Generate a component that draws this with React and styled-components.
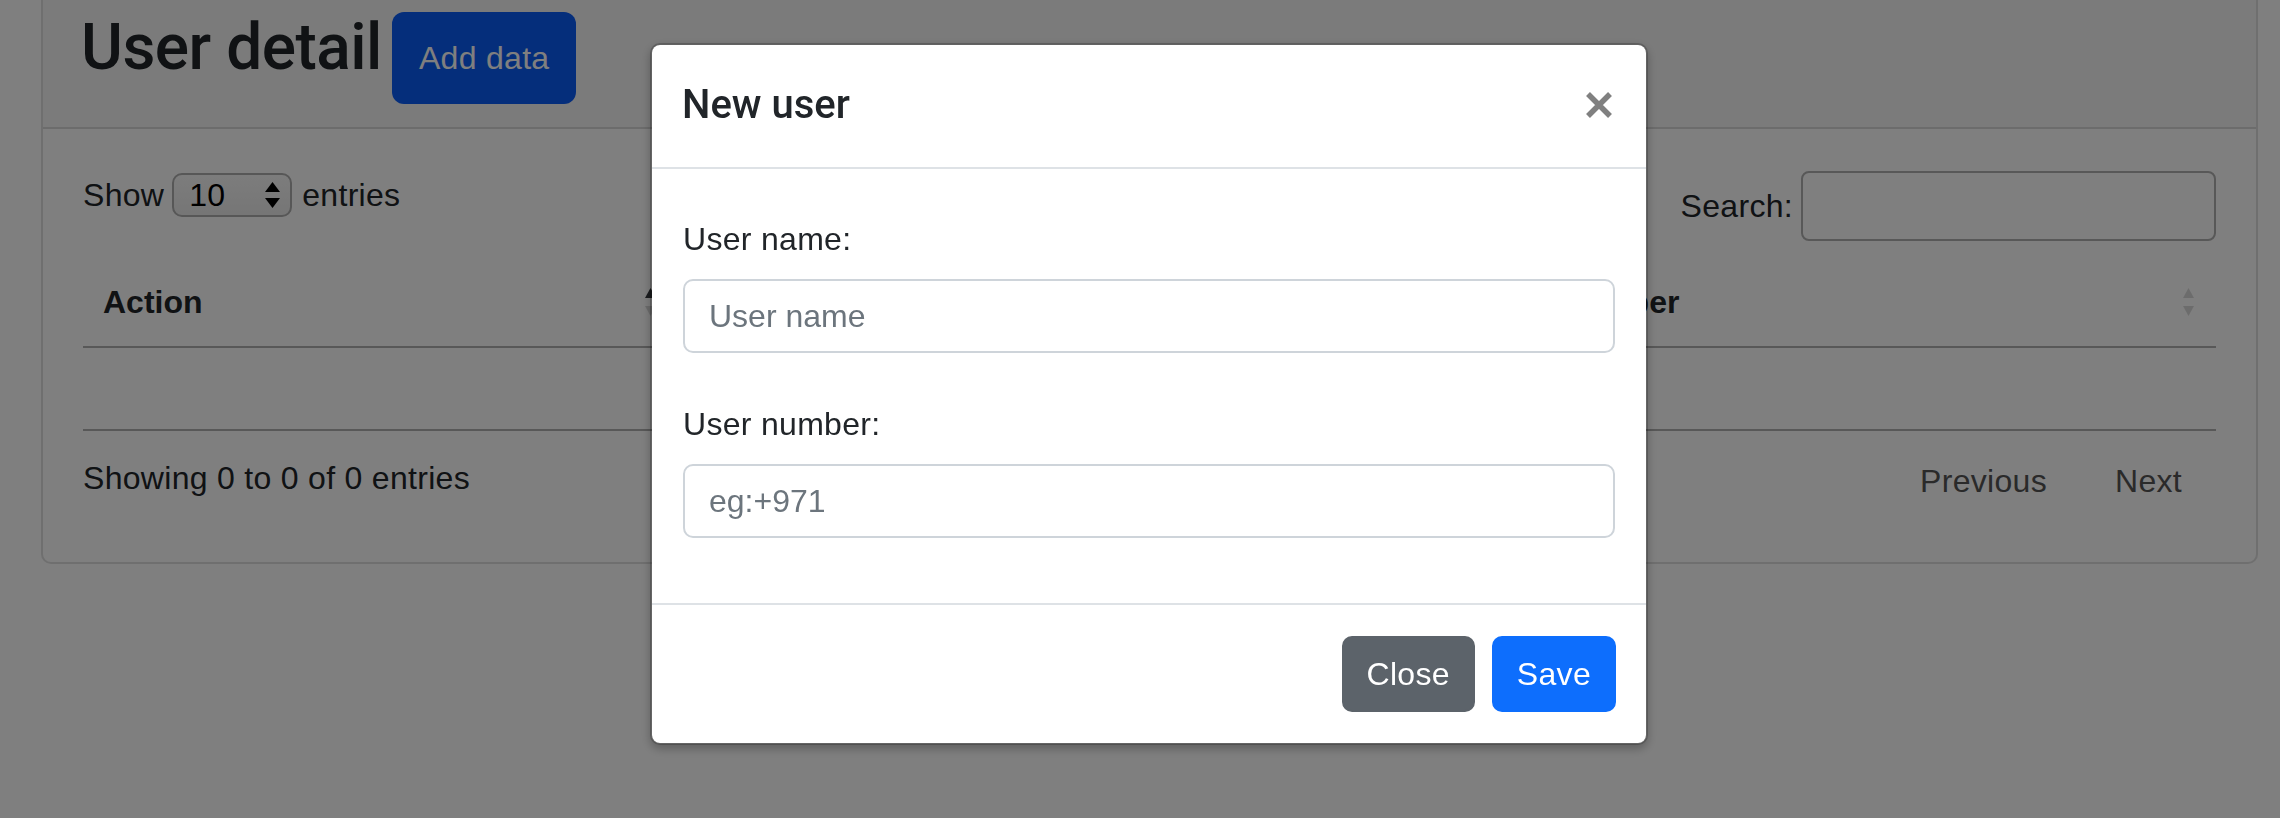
import React from "react";
import styled, { createGlobalStyle } from "styled-components";

const GlobalStyle = createGlobalStyle`
  * { box-sizing: border-box; }
  html, body { margin: 0; padding: 0; }
  body {
    font-family: "Liberation Sans", Arial, sans-serif;
    font-size: 32px;
    line-height: 1.5;
    letter-spacing: 0.3px;
    color: #212529;
    background: #fff;
    overflow: hidden;
  }
`;

const Page = styled.div`
  min-height: 818px;
  padding: 0 22px 0 41px;
`;

const Card = styled.section`
  margin-top: -10px;
  border: 2px solid rgba(0, 0, 0, 0.125);
  border-radius: 10px;
  background: #fff;
  overflow: hidden;
`;

const CardHeader = styled.header`
  display: flex;
  align-items: flex-start;
  gap: 10px;
  padding: 18px 38px 23px;
  background: rgba(0, 0, 0, 0.03);
  border-bottom: 2px solid rgba(0, 0, 0, 0.125);
`;

const PageTitle = styled.h2`
  margin: 0;
  font-family: Roboto, "Liberation Sans", sans-serif;
  font-size: 64px;
  font-weight: 500;
  line-height: 1.2;
  letter-spacing: -0.5px;
`;

const AddButton = styled.button`
  margin-top: 2px;
  height: 92px;
  padding: 0 27px;
  font: inherit;
  font-size: 32px;
  letter-spacing: 0.3px;
  color: #fff;
  background: #0a5cf6;
  border: none;
  border-radius: 12px;
`;

const CardBody = styled.div`
  padding: 42px 40px 57px;
`;

const TopBar = styled.div`
  display: flex;
  justify-content: space-between;
  align-items: flex-start;
`;

const LengthControl = styled.label`
  display: flex;
  align-items: center;
  height: 48px;
`;

const SelectBox = styled.div`
  display: flex;
  align-items: center;
  justify-content: space-between;
  width: 120px;
  height: 44px;
  margin: 0 10px 0 8px;
  padding: 0 10px 0 15px;
  border: 2px solid #aeaeae;
  border-radius: 10px;
  background: linear-gradient(#f9f9f9, #ececec);
  color: #000;
`;

const SearchControl = styled.label`
  display: flex;
  align-items: center;
  gap: 8px;
`;

const SearchInput = styled.input`
  width: 415px;
  height: 70px;
  padding: 0 10px;
  border: 2px solid #b0b0b0;
  border-radius: 8px;
  background: transparent;
  font: inherit;
`;

const Table = styled.table`
  width: 100%;
  margin-top: 17px;
  border-collapse: collapse;
  table-layout: fixed;
`;

const Th = styled.th`
  width: ${(p) => (p.$w ? `${p.$w}px` : "auto")};
  padding: 20px 22px 20px 20px;
  text-align: left;
  font-weight: 700;
  letter-spacing: 0;
  border-bottom: 2px solid #b0b0b0;
`;

const HeadInner = styled.div`
  display: flex;
  align-items: center;
  justify-content: space-between;
`;

const Td = styled.td`
  height: 83px;
  padding: 16px 20px;
  border-bottom: 2px solid #b0b0b0;
`;

const TableFooter = styled.div`
  display: flex;
  justify-content: space-between;
  align-items: flex-start;
  margin-top: 23px;
`;

const Info = styled.div`
  line-height: 48px;
`;

const Pagination = styled.nav`
  display: flex;
  margin-top: 3px;
`;

const PageLink = styled.span`
  padding: 0 34px;
  color: #555;
  line-height: 48px;
`;

const Backdrop = styled.div`
  position: fixed;
  inset: 0;
  background: rgba(0, 0, 0, 0.5);
`;

const ModalLayer = styled.div`
  position: fixed;
  inset: 0;
  display: flex;
  justify-content: center;
  align-items: flex-start;
  padding: 43px 0 0 18px;
`;

const ModalContent = styled.div`
  width: 998px;
  background: #fff;
  background-clip: padding-box;
  border: 2px solid rgba(0, 0, 0, 0.2);
  border-radius: 10px;
  box-shadow: 0 4px 10px rgba(0, 0, 0, 0.25);
`;

const ModalHeader = styled.div`
  display: flex;
  align-items: center;
  justify-content: space-between;
  padding: 30px 33px 32px 30px;
  border-bottom: 2px solid #dee2e6;
`;

const ModalTitle = styled.h5`
  margin: 0;
  font-family: Roboto, "Liberation Sans", sans-serif;
  font-size: 40px;
  font-weight: 500;
  line-height: 1.5;
  letter-spacing: 0;
`;

const CloseIcon = styled.button`
  display: flex;
  padding: 0;
  border: none;
  background: none;
  color: #808080;
`;

const ModalBody = styled.div`
  padding: 46px 31px 18px;
`;

const FieldGroup = styled.div`
  margin-bottom: 47px;
`;

const FieldLabel = styled.label`
  display: block;
  margin-bottom: 16px;
  line-height: 48px;
`;

const TextInput = styled.input`
  display: block;
  width: 100%;
  height: 74px;
  padding: 0 24px;
  border: 2px solid #ced4da;
  border-radius: 10px;
  font: inherit;
  color: #212529;
  background: #fff;
  &::placeholder {
    color: #6c757d;
  }
`;

const ModalFooter = styled.div`
  display: flex;
  justify-content: flex-end;
  gap: 17px;
  padding: 31px 30px;
  border-top: 2px solid #dee2e6;
`;

const ModalButton = styled.button`
  height: 76px;
  padding: 0 23px;
  font: inherit;
  font-size: 32px;
  letter-spacing: 0.3px;
  color: #fff;
  background: ${(p) => p.$bg};
  border: 2px solid ${(p) => p.$bg};
  border-radius: 10px;
`;

const SelectArrows = () => (
  <svg width="15" height="26" viewBox="0 0 15 26">
    <path d="M7.5 0 L15 10 L0 10 Z" fill="#000" />
    <path d="M0 16 L15 16 L7.5 26 Z" fill="#000" />
  </svg>
);

const SortIcon = ({ active }) => (
  <svg width="11" height="28" viewBox="0 0 11 28">
    <path d="M5.5 0 L11 10 L0 10 Z" fill={active ? "#212529" : "#000"} opacity={active ? 0.9 : 0.15} />
    <path d="M0 18 L11 18 L5.5 28 Z" fill="#000" opacity="0.15" />
  </svg>
);

const XIcon = () => (
  <svg width="28" height="28" viewBox="0 0 28 28">
    <path d="M3 3 L25 25 M25 3 L3 25" stroke="currentColor" strokeWidth="5.5" />
  </svg>
);

export default function App() {
  return (
    <>
      <GlobalStyle />
      <Page>
        <Card>
          <CardHeader>
            <PageTitle>User detail</PageTitle>
            <AddButton>Add data</AddButton>
          </CardHeader>
          <CardBody>
            <TopBar>
              <LengthControl>
                Show
                <SelectBox>
                  <span>10</span>
                  <SelectArrows />
                </SelectBox>
                entries
              </LengthControl>
              <SearchControl>
                Search:
                <SearchInput type="search" />
              </SearchControl>
            </TopBar>
            <Table>
              <thead>
                <tr>
                  <Th $w={595}>
                    <HeadInner>
                      Action
                      <SortIcon active />
                    </HeadInner>
                  </Th>
                  <Th $w={784}>
                    <HeadInner>
                      User name
                      <SortIcon />
                    </HeadInner>
                  </Th>
                  <Th>
                    <HeadInner>
                      User number
                      <SortIcon />
                    </HeadInner>
                  </Th>
                </tr>
              </thead>
              <tbody>
                <tr>
                  <Td />
                  <Td />
                  <Td />
                </tr>
              </tbody>
            </Table>
            <TableFooter>
              <Info>Showing 0 to 0 of 0 entries</Info>
              <Pagination>
                <PageLink>Previous</PageLink>
                <PageLink>Next</PageLink>
              </Pagination>
            </TableFooter>
          </CardBody>
        </Card>
      </Page>
      <Backdrop />
      <ModalLayer>
        <ModalContent>
          <ModalHeader>
            <ModalTitle>New user</ModalTitle>
            <CloseIcon aria-label="Close">
              <XIcon />
            </CloseIcon>
          </ModalHeader>
          <ModalBody>
            <FieldGroup>
              <FieldLabel>User name:</FieldLabel>
              <TextInput placeholder="User name" />
            </FieldGroup>
            <FieldGroup>
              <FieldLabel>User number:</FieldLabel>
              <TextInput placeholder="eg:+971" />
            </FieldGroup>
          </ModalBody>
          <ModalFooter>
            <ModalButton $bg="#5c636a">Close</ModalButton>
            <ModalButton $bg="#0d6efd">Save</ModalButton>
          </ModalFooter>
        </ModalContent>
      </ModalLayer>
    </>
  );
}
